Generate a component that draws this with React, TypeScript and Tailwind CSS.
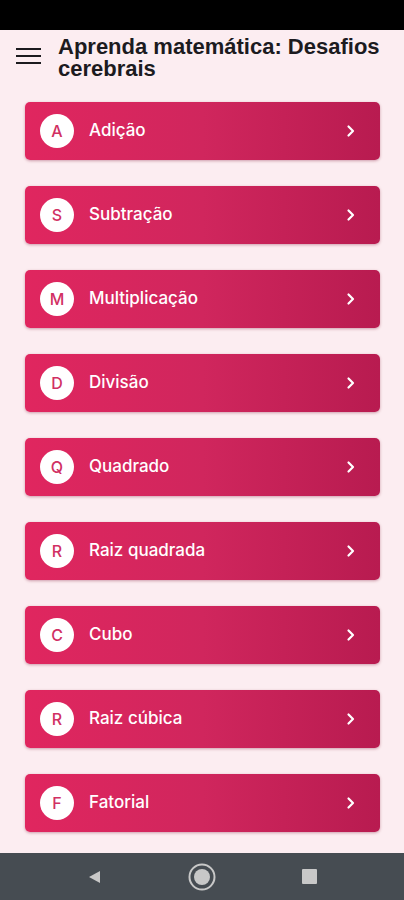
import React from 'react';

const topics = [
  { letter: 'A', name: 'Adição' },
  { letter: 'S', name: 'Subtração' },
  { letter: 'M', name: 'Multiplicação' },
  { letter: 'D', name: 'Divisão' },
  { letter: 'Q', name: 'Quadrado' },
  { letter: 'R', name: 'Raiz quadrada' },
  { letter: 'C', name: 'Cubo' },
  { letter: 'R', name: 'Raiz cúbica' },
  { letter: 'F', name: 'Fatorial' },
];

const Chevron = () => (
  <svg width="14" height="14" viewBox="0 0 14 14" fill="none">
    <path d="M4.5 2.5 L9 7 L4.5 11.5" stroke="white" strokeWidth="2.2" strokeLinecap="round" strokeLinejoin="round" />
  </svg>
);

const App: React.FC = () => {
  return (
    <div className="w-[404px] h-[900px] flex flex-col bg-[#fcedf1] overflow-hidden" style={{ fontFamily: '"Liberation Sans", Arial, sans-serif' }}>
      <div className="h-[30px] bg-black shrink-0" />

      <header className="flex items-start pl-4 pr-3 pt-[6px] h-[72px] shrink-0">
        <div className="flex flex-col gap-[5px] mt-[12px] w-[25px] shrink-0">
          <span className="block h-[2px] bg-[#1c1b1f]" />
          <span className="block h-[2px] bg-[#1c1b1f]" />
          <span className="block h-[2px] bg-[#1c1b1f]" />
        </div>
        <h1 className="ml-[17px] text-[22px] leading-[22px] font-bold text-[#1c1b1f]">
          Aprenda matemática: Desafios cerebrais
        </h1>
      </header>

      <main className="flex-1 flex flex-col gap-[26px] px-[25px] pr-[24px]">
        {topics.map((t, i) => (
          <div
            key={i}
            className="h-[58px] rounded-[5px] flex items-center pl-[15px] pr-[22px] bg-gradient-to-r from-[#e0265f] via-[#d0265d] to-[#b81b50] shadow-[0_1px_3px_rgba(120,0,40,0.35)]"
          >
            <div className="w-[34px] h-[34px] rounded-full bg-white flex items-center justify-center text-[#d13063] text-[16px] font-medium font-[Inter] shrink-0">
              {t.letter}
            </div>
            <span className="ml-[15px] text-white text-[17px] leading-[20px] font-medium font-[Inter] flex-1 -mt-[2px]">{t.name}</span>
            <Chevron />
          </div>
        ))}
      </main>

      <nav className="h-[47px] bg-[#464c52] flex items-center shrink-0">
        <div className="w-[86px]" />
        <svg width="16" height="16" viewBox="0 0 16 16">
          <path d="M14 2 L3 8 L14 14 Z" fill="#c8c8c8" />
        </svg>
        <div className="w-[85px]" />
        <svg width="30" height="30" viewBox="0 0 30 30">
          <circle cx="15" cy="15" r="12.5" fill="none" stroke="#c8c8c8" strokeWidth="2" />
          <circle cx="15" cy="15" r="8" fill="#c8c8c8" />
        </svg>
        <div className="w-[85px]" />
        <div className="w-[15px] h-[15px] bg-[#c8c8c8] rounded-[1px]" />
      </nav>
    </div>
  );
};

export default App;
